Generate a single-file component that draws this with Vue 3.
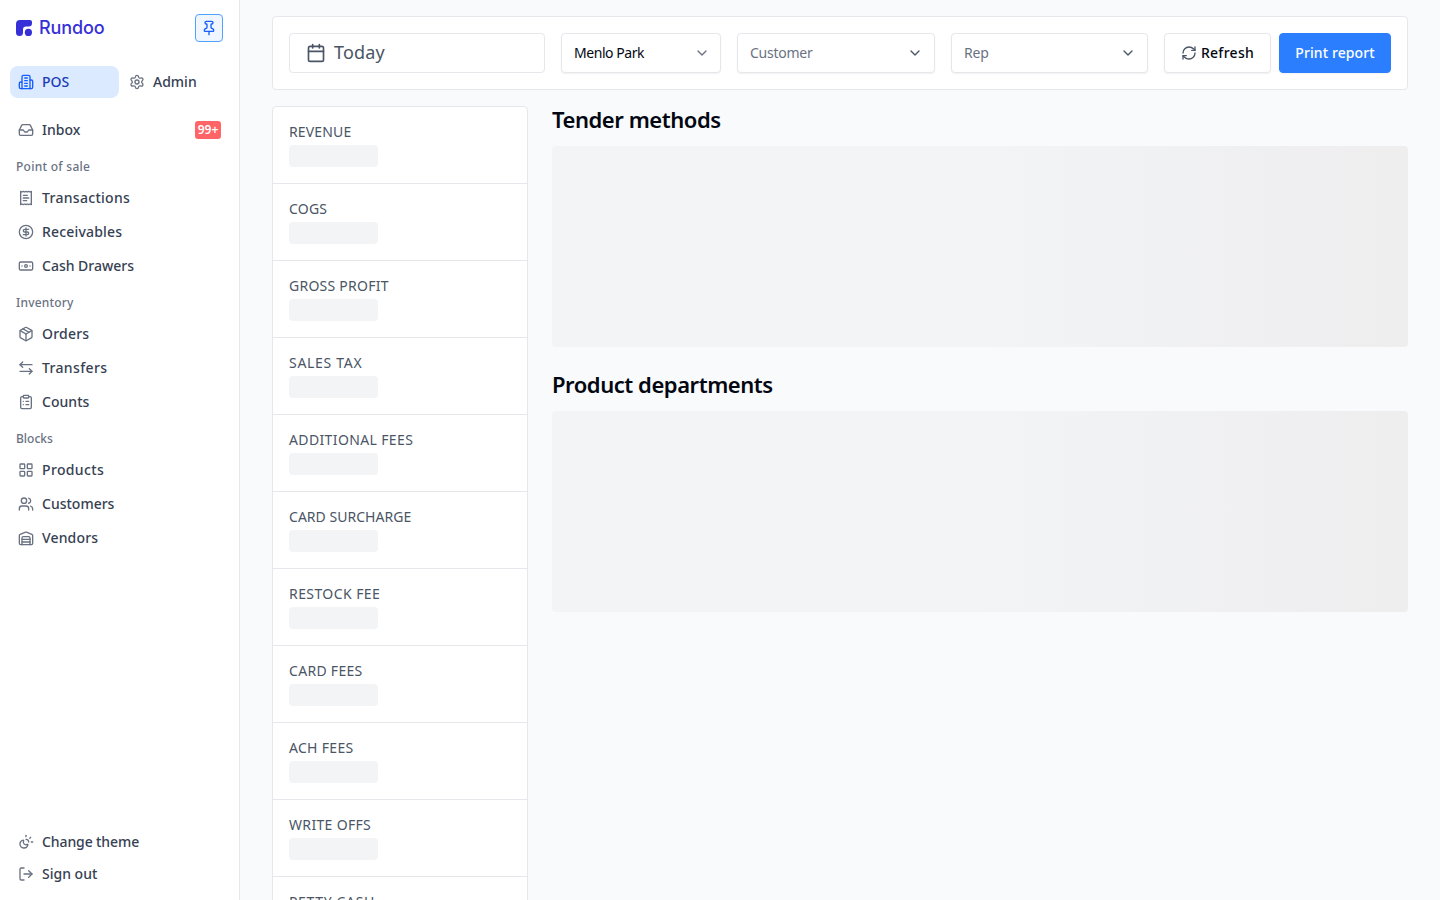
<script setup>
import { ref } from 'vue'

// 24x24 outline icons
const icons = {
    pin: '<path d="M12 17v5"/><path d="M9 10.76a2 2 0 0 1-1.11 1.79l-1.78.9A2 2 0 0 0 5 15.24V16a1 1 0 0 0 1 1h12a1 1 0 0 0 1-1v-.76a2 2 0 0 0-1.11-1.79l-1.78-.9A2 2 0 0 1 15 10.76V7a1 1 0 0 1 1-1 2 2 0 0 0 0-4H8a2 2 0 0 0 0 4 1 1 0 0 1 1 1z"/>',
    building: '<path d="M6 22V4a2 2 0 0 1 2-2h8a2 2 0 0 1 2 2v18Z"/><path d="M6 12H4a2 2 0 0 0-2 2v6a2 2 0 0 0 2 2h2"/><path d="M18 9h2a2 2 0 0 1 2 2v9a2 2 0 0 1-2 2h-2"/><path d="M10 6h4"/><path d="M10 10h4"/><path d="M10 14h4"/><path d="M10 18h4"/>',
    settings: '<path d="M9.671 4.136a2.34 2.34 0 0 1 4.659 0 2.34 2.34 0 0 0 3.319 1.915 2.34 2.34 0 0 1 2.33 4.033 2.34 2.34 0 0 0 0 3.831 2.34 2.34 0 0 1-2.33 4.033 2.34 2.34 0 0 0-3.319 1.915 2.34 2.34 0 0 1-4.659 0 2.34 2.34 0 0 0-3.32-1.915 2.34 2.34 0 0 1-2.33-4.033 2.34 2.34 0 0 0 0-3.831A2.34 2.34 0 0 1 6.35 6.051a2.34 2.34 0 0 0 3.319-1.915"/><circle cx="12" cy="12" r="3"/>',
    inbox: '<path d="M22 12h-6l-2 3h-4l-2-3H2"/><path d="M5.45 5.11 2 12v6a2 2 0 0 0 2 2h16a2 2 0 0 0 2-2v-6l-3.45-6.89A2 2 0 0 0 16.76 4H7.24a2 2 0 0 0-1.79 1.11z"/>',
    receipt: '<path d="M4 2v20l2-1 2 1 2-1 2 1 2-1 2 1 2-1 2 1V2l-2 1-2-1-2 1-2-1-2 1-2-1-2 1Z"/><path d="M14 8H8"/><path d="M16 12H8"/><path d="M13 16H8"/>',
    dollar: '<circle cx="12" cy="12" r="10"/><path d="M16 8h-6a2 2 0 1 0 0 4h4a2 2 0 1 1 0 4H8"/><path d="M12 18V6"/>',
    banknote: '<rect x="2" y="6" width="20" height="12" rx="2"/><circle cx="12" cy="12" r="2"/><path d="M6 12h.01M18 12h.01"/>',
    package: '<path d="M11 21.73a2 2 0 0 0 2 0l7-4A2 2 0 0 0 21 16V8a2 2 0 0 0-1-1.73l-7-4a2 2 0 0 0-2 0l-7 4A2 2 0 0 0 3 8v8a2 2 0 0 0 1 1.73z"/><path d="M12 22V12"/><path d="M3.29 7 12 12l8.71-5"/><path d="m7.5 4.27 9 5.15"/>',
    transfer: '<path d="m7 3-4 4 4 4"/><path d="M3 7h18"/><path d="m17 21 4-4-4-4"/><path d="M21 17H3"/>',
    clipboard: '<rect x="8" y="2" width="8" height="4" rx="1"/><path d="M16 4h2a2 2 0 0 1 2 2v14a2 2 0 0 1-2 2H6a2 2 0 0 1-2-2V6a2 2 0 0 1 2-2h2"/><path d="M12 11h4"/><path d="M12 16h4"/><path d="M8 11h.01"/><path d="M8 16h.01"/>',
    grid: '<rect x="3" y="3" width="7" height="7" rx="1"/><rect x="14" y="3" width="7" height="7" rx="1"/><rect x="14" y="14" width="7" height="7" rx="1"/><rect x="3" y="14" width="7" height="7" rx="1"/>',
    users: '<path d="M16 21v-2a4 4 0 0 0-4-4H6a4 4 0 0 0-4 4v2"/><circle cx="9" cy="7" r="4"/><path d="M22 21v-2a4 4 0 0 0-3-3.87"/><path d="M16 3.13a4 4 0 0 1 0 7.75"/>',
    warehouse: '<path d="M22 8.35V20a2 2 0 0 1-2 2H4a2 2 0 0 1-2-2V8.35A2 2 0 0 1 3.26 6.5l8-3.2a2 2 0 0 1 1.48 0l8 3.2A2 2 0 0 1 22 8.35Z"/><path d="M6 18h12"/><path d="M6 14h12"/><path d="M18 22V12a2 2 0 0 0-2-2H8a2 2 0 0 0-2 2v10"/>',
    theme: '<path d="M12 2v2"/><path d="M14.837 16.385a6 6 0 1 1-7.223-7.222c.624-.147.97.66.715 1.248a4 4 0 0 0 5.26 5.259c.589-.255 1.396.09 1.248.715"/><path d="M16 12a4 4 0 0 0-4-4"/><path d="m19 5-1.256 1.256"/><path d="M20 12h2"/>',
    logout: '<path d="M9 21H5a2 2 0 0 1-2-2V5a2 2 0 0 1 2-2h4"/><path d="m16 17 5-5-5-5"/><path d="M21 12H9"/>',
    calendar: '<path d="M8 2v4"/><path d="M16 2v4"/><rect x="3" y="4" width="18" height="18" rx="2"/><path d="M3 10h18"/>',
    chevron: '<path d="m6 9 6 6 6-6"/>',
    refresh: '<path d="M3 12a9 9 0 0 1 9-9 9.75 9.75 0 0 1 6.74 2.74L21 8"/><path d="M21 3v5h-5"/><path d="M21 12a9 9 0 0 1-9 9 9.75 9.75 0 0 1-6.74-2.74L3 16"/><path d="M8 16H3v5"/>'
}

// tracking = letter spacing in px
const groups = [
    {
        title: 'Point of sale',
        tracking: 0.27,
        items: [
            { label: 'Transactions', icon: 'receipt', tracking: 0.3 },
            { label: 'Receivables', icon: 'dollar', tracking: 0.17 },
            { label: 'Cash Drawers', icon: 'banknote', tracking: 0 }
        ]
    },
    {
        title: 'Inventory',
        tracking: 0.2,
        items: [
            { label: 'Orders', icon: 'package', tracking: 0.2 },
            { label: 'Transfers', icon: 'transfer', tracking: 0.35 },
            { label: 'Counts', icon: 'clipboard', tracking: 0.05 }
        ]
    },
    {
        title: 'Blocks',
        tracking: 0,
        items: [
            { label: 'Products', icon: 'grid', tracking: 0.35 },
            { label: 'Customers', icon: 'users', tracking: 0 },
            { label: 'Vendors', icon: 'warehouse', tracking: 0.15 }
        ]
    }
]

const stats = [
    { label: 'REVENUE', tracking: 0.15 },
    { label: 'COGS', tracking: 0.2 },
    { label: 'GROSS PROFIT', tracking: 0.25 },
    { label: 'SALES TAX', tracking: 0.7 },
    { label: 'ADDITIONAL FEES', tracking: 0.37 },
    { label: 'CARD SURCHARGE', tracking: 0.03 },
    { label: 'RESTOCK FEE', tracking: 0.42 },
    { label: 'CARD FEES', tracking: 0.3 },
    { label: 'ACH FEES', tracking: 0.3 },
    { label: 'WRITE OFFS', tracking: 0.33 },
    { label: 'PETTY CASH', tracking: 0.65 }
]

const sections = ['Tender methods', 'Product departments']

const activeTab = ref('POS')
const tabs = [
    { label: 'POS', icon: 'building' },
    { label: 'Admin', icon: 'settings' }
]
</script>

<template>
    <div class="layout">
        <aside class="sidebar">
            <div class="brand">
                <svg class="logoMark" viewBox="0 0 16 16">
                    <path d="M4 0h10a2 2 0 0 1 2 2v1.200a3.300 3.300 0 0 1-3.300 3.300H10a3 3 0 0 0-3 3V12.500A3.500 3.500 0 0 1 0 12.500V4a4 4 0 0 1 4-4z"/>
                    <circle cx="12.400" cy="12.400" r="3.600"/>
                </svg>
                <span class="logoText">Rundoo</span>
                <button class="pinButton">
                    <svg class="icon" viewBox="0 0 24 24" v-html="icons.pin"></svg>
                </button>
            </div>
            <div class="tabs">
                <div v-for="tab in tabs" :key="tab.label" class="tab" :class="{ active: activeTab === tab.label }" @click="activeTab = tab.label">
                    <svg class="icon" viewBox="0 0 24 24" v-html="icons[tab.icon]"></svg>
                    <span class="label">{{ tab.label }}</span>
                </div>
            </div>
            <nav class="nav">
                <div class="navItem">
                    <svg class="icon" viewBox="0 0 24 24" v-html="icons.inbox"></svg>
                    <span class="label">Inbox</span>
                    <span class="badge">99+</span>
                </div>
                <template v-for="group in groups" :key="group.title">
                    <p class="groupTitle" :style="{ letterSpacing: group.tracking + 'px' }">{{ group.title }}</p>
                    <div v-for="item in group.items" :key="item.label" class="navItem">
                        <svg class="icon" viewBox="0 0 24 24" v-html="icons[item.icon]"></svg>
                        <span class="label" :style="{ letterSpacing: item.tracking + 'px' }">{{ item.label }}</span>
                    </div>
                </template>
            </nav>
            <div class="sidebarFooter">
                <div class="navItem">
                    <svg class="icon" viewBox="0 0 24 24" v-html="icons.theme"></svg>
                    <span class="label changeTheme">Change theme</span>
                </div>
                <div class="navItem">
                    <svg class="icon" viewBox="0 0 24 24" v-html="icons.logout"></svg>
                    <span class="label">Sign out</span>
                </div>
            </div>
        </aside>

        <main class="content">
            <div class="toolbar">
                <div class="dateField">
                    <svg class="icon" viewBox="0 0 24 24" v-html="icons.calendar"></svg>
                    <span class="label">Today</span>
                </div>
                <div class="select location">
                    <span class="label">Menlo Park</span>
                    <svg class="icon" viewBox="0 0 24 24" v-html="icons.chevron"></svg>
                </div>
                <div class="select placeholder customer">
                    <span class="label">Customer</span>
                    <svg class="icon" viewBox="0 0 24 24" v-html="icons.chevron"></svg>
                </div>
                <div class="select placeholder rep">
                    <span class="label">Rep</span>
                    <svg class="icon" viewBox="0 0 24 24" v-html="icons.chevron"></svg>
                </div>
                <div class="actions">
                    <button class="button refresh">
                        <svg class="icon" viewBox="0 0 24 24" v-html="icons.refresh"></svg>
                        <span class="label">Refresh</span>
                    </button>
                    <button class="button print">
                        <span class="label">Print report</span>
                    </button>
                </div>
            </div>
            <div class="report">
                <div class="stats">
                    <div v-for="stat in stats" :key="stat.label" class="stat">
                        <p class="statLabel" :style="{ letterSpacing: stat.tracking + 'px' }">{{ stat.label }}</p>
                        <div class="statSkeleton"></div>
                    </div>
                </div>
                <div class="sections">
                    <section v-for="section in sections" :key="section">
                        <h2>{{ section }}</h2>
                        <div class="sectionSkeleton"></div>
                    </section>
                </div>
            </div>
        </main>
    </div>
</template>

<style>
body{
    margin: 0;
    overflow: hidden;
}
</style>

<style scoped>
*{
    box-sizing: border-box;
}
p, h2{
    margin: 0;
}
.layout{
    display: flex;
    height: 100vh;
    overflow: hidden;
    background: #f9fafb;
    font-family: "Noto Sans", sans-serif;
    font-size: 14px;
    color: #030712;
}
button{
    font: inherit;
    cursor: pointer;
}
span, p, h2{
    white-space: nowrap;
}
.label{
    padding-bottom: 2px;
}
.icon{
    width: 16px;
    height: 16px;
    flex: none;
    fill: none;
    stroke: currentColor;
    stroke-width: 2;
    stroke-linecap: round;
    stroke-linejoin: round;
}
.sidebar{
    display: flex;
    flex-direction: column;
    width: 240px;
    flex: none;
    padding: 14px 16px 10px 10px;
    background: #fff;
    border-right: 1px solid #e5e7eb;
}
.brand{
    display: flex;
    align-items: center;
    height: 28px;
    padding-left: 6px;
}
.logoMark{
    width: 16px;
    height: 16px;
    fill: #3730d9;
}
.logoText{
    margin-left: 7px;
    padding-bottom: 1px;
    font-family: Inter, sans-serif;
    font-size: 18px;
    font-weight: 550;
    letter-spacing: -0.1px;
    color: #3730d9;
}
.pinButton{
    display: flex;
    align-items: center;
    justify-content: center;
    width: 28px;
    height: 28px;
    margin-left: auto;
    padding: 0;
    background: #eff6ff;
    border: 1px solid #51a2ff;
    border-radius: 4px;
    color: #155dfc;
}
.tabs{
    display: flex;
    gap: 2px;
    margin-top: 24px;
}
.tab{
    display: flex;
    align-items: center;
    gap: 8px;
    width: 109px;
    flex: none;
    height: 32px;
    padding-left: 8px;
    border-radius: 8px;
    font-weight: 500;
    color: #364153;
    cursor: pointer;
}
.tab .icon{
    color: #6a7282;
}
.tab.active{
    background: #dbeafe;
    color: #193cb8;
}
.tab.active .icon{
    color: #155dfc;
}
.nav{
    display: flex;
    flex-direction: column;
    gap: 2px;
    margin-top: 16px;
}
.navItem{
    display: flex;
    align-items: center;
    gap: 8px;
    height: 32px;
    padding-left: 8px;
    font-weight: 500;
    color: #364153;
    cursor: pointer;
}
.navItem .icon{
    color: #6a7282;
}
.badge{
    margin-left: auto;
    margin-right: 2px;
    width: 26px;
    height: 18px;
    border-radius: 3px;
    background: #ff6467;
    color: #fff;
    font-size: 12px;
    font-weight: 600;
    line-height: 17px;
    text-align: center;
}
.groupTitle{
    height: 32px;
    padding: 4px 6px 0;
    font-size: 12px;
    font-weight: 500;
    line-height: 30px;
    color: #6a7282;
}
.sidebarFooter{
    margin-top: auto;
}
.changeTheme{
    letter-spacing: -0.1px;
}
.content{
    flex: 1;
    min-width: 0;
    padding: 16px 32px 0;
}
.toolbar{
    display: flex;
    gap: 16px;
    height: 74px;
    padding: 16px;
    background: #fff;
    border: 1px solid #e5e7eb;
    border-radius: 4px;
}
.dateField{
    display: flex;
    align-items: center;
    gap: 8px;
    width: 256px;
    padding-left: 16px;
    border: 1px solid #e5e7eb;
    border-radius: 4px;
    font-size: 18px;
    letter-spacing: 0.2px;
    color: #4a5565;
}
.dateField .icon{
    width: 20px;
    height: 20px;
}
.select{
    display: flex;
    align-items: center;
    justify-content: space-between;
    padding: 0 11px 0 12px;
    border: 1px solid #e5e7eb;
    border-radius: 4px;
    box-shadow: 0 1px 2px rgba(0, 0, 0, 0.06);
    background: #fff;
}
.select .icon{
    color: #4a5565;
}
.location{
    width: 160px;
    padding-right: 10px;
    letter-spacing: -0.45px;
}
.location .icon{
    color: #6a7282;
}
.customer{
    width: 198px;
    letter-spacing: -0.25px;
}
.rep{
    width: 197px;
    letter-spacing: -0.2px;
}
.placeholder{
    color: #6a7282;
}
.actions{
    display: flex;
    gap: 8px;
}
.button{
    display: flex;
    align-items: center;
    justify-content: center;
    gap: 4px;
    height: 40px;
    padding: 0;
    border: 1px solid #e5e7eb;
    border-radius: 4px;
    background: #fff;
    box-shadow: 0 1px 2px rgba(0, 0, 0, 0.06);
    font-weight: 500;
    color: #030712;
}
.button .icon{
    color: #4a5565;
}
.refresh{
    width: 107px;
    letter-spacing: 0.3px;
}
.print{
    width: 112px;
    border-color: #2b7fff;
    background: #2b7fff;
    color: #fff;
    letter-spacing: 0.1px;
}
.report{
    display: flex;
    align-items: flex-start;
    gap: 24px;
    margin-top: 16px;
}
.stats{
    width: 256px;
    flex: none;
    background: #fff;
    border: 1px solid #e5e7eb;
    border-radius: 4px;
}
.stat{
    padding: 16px;
    border-bottom: 1px solid #e5e7eb;
}
.statLabel{
    line-height: 18px;
    color: #4a5565;
}
.statSkeleton{
    width: 89px;
    height: 22px;
    margin-top: 4px;
    border-radius: 4px;
    background: #f3f4f6;
}
.sections{
    display: flex;
    flex-direction: column;
    gap: 24px;
    flex: 1;
}
h2{
    height: 28px;
    font-size: 22px;
    font-weight: 600;
    line-height: 26px;
    letter-spacing: -0.45px;
}
.sectionSkeleton{
    height: 201px;
    margin-top: 12px;
    border-radius: 4px;
    background: linear-gradient(90deg, #f3f4f6 50%, #efeff1 88%, #eeeeee 100%);
}
</style>
